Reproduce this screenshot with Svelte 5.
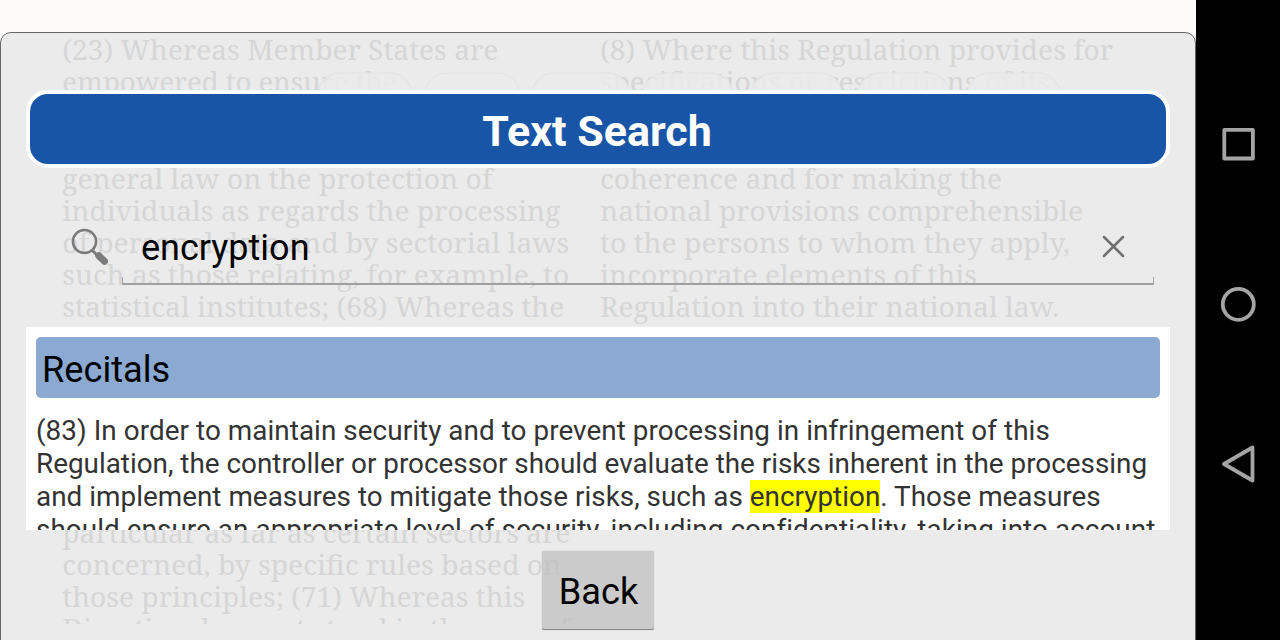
<script>
  const left = [
    [60, 436, '(23) Whereas Member States are'],
    [92, 335, 'empowered to ensure the'],
    [188.5, 430, 'general law on the protection of'],
    [220.5, 498, 'individuals as regards the processing'],
    [252.5, 507, 'of personal data and by sectorial laws'],
    [284.5, 507, 'such as those relating, for example, to'],
    [316.5, 502, 'statistical institutes; (68) Whereas the'],
    [542.5, 508, 'particular as far as certain sectors are'],
    [574.5, 499, 'concerned, by specific rules based on'],
    [606.5, 463, 'those principles; (71) Whereas this'],
    [638.5, 508, 'Directive does not stand in the way of']
  ];
  const right = [
    [60, 513, '(8) Where this Regulation provides for'],
    [92, 450, 'specifications or restrictions of its'],
    [188.5, 402, 'coherence and for making the'],
    [220.5, 483, 'national provisions comprehensible'],
    [252.5, 470, 'to the persons to whom they apply,'],
    [284.5, 377, 'incorporate elements of this'],
    [316.5, 459, 'Regulation into their national law.']
  ];
  const columns = [{ x: 62.3, lines: left }, { x: 600, lines: right }];
  const pills = [[318, 94], [425, 95], [532, 98], [643, 90], [751, 91], [858, 92], [967, 93]];
</script>

<div class="screen">
  <main>
    <div class="strip"></div>
    <section class="dialog">
      <svg class="backdrop" width="1194" height="608" viewBox="1 33 1194 608" aria-hidden="true">
        <clipPath id="page"><rect x="0" y="34" width="1196" height="590" /></clipPath>
        <g clip-path="url(#page)">
          {#each columns as col}
            {#each col.lines as [y, w, t]}
              <text x={col.x} {y} textLength={w} lengthAdjust="spacingAndGlyphs">{t}</text>
            {/each}
          {/each}
          {#each pills as [x, w]}
            <rect class="pill" {x} y="73" width={w} height="44" rx="22" />
          {/each}
        </g>
      </svg>
      <div class="content">
        <h1>Text Search</h1>
        <div class="search">
          <svg class="mag" width="44" height="44" viewBox="68 224 44 44">
            <circle cx="84.5" cy="241.5" r="11.6" fill="none" stroke="#7b7b7b" stroke-width="2.5" />
            <path d="M92.5 250.5L97 255" stroke="#7b7b7b" stroke-width="3" />
            <path d="M98.8 255.8L104.5 261.3" stroke="#7b7b7b" stroke-width="7" stroke-linecap="round" />
          </svg>
          <div class="field">
            <span>encryption</span>
            <svg width="24" height="24" viewBox="0.5 0.5 24 24"><path d="M2.5 2.5L21.5 21.5M21.5 2.5L2.5 21.5" stroke="#6f6f6f" stroke-width="2.5" stroke-linecap="round" /></svg>
          </div>
        </div>
        <div class="results">
          <h2>Recitals</h2>
          <p>
            <span class="loose">(83) In order to maintain security and to prevent processing in infringement of this</span><br />
            Regulation, the controller or processor should evaluate the risks inherent in the processing<br />
            <span class="medium">and implement measures to mitigate those risks, such as <mark>encryption</mark>. Those measures</span><br />
            <span class="loose">should ensure an appropriate level of security, including confidentiality, taking into account</span>
          </p>
        </div>
        <button>Back</button>
      </div>
    </section>
  </main>
  <nav>
    <svg width="84" height="640" viewBox="1196 0 84 640" fill="none" stroke="#a4a4a4" stroke-width="3.8" stroke-linejoin="round">
      <rect x="1224.3" y="129.9" width="28.6" height="28.6" />
      <circle cx="1238.3" cy="304.3" r="15.5" />
      <path d="M1252.5 447.5V480.5L1224 464Z" />
    </svg>
  </nav>
</div>

<style>
  :global(body) { margin: 0; overflow: hidden; }
  .screen { display: flex; width: 1280px; height: 640px; overflow: hidden; background: #000; font-family: Roboto, sans-serif; }
  main { width: 1196px; height: 640px; background: #fcfbf9; overflow: hidden; }
  .strip { height: 32px; }
  .dialog { position: relative; box-sizing: border-box; width: 1196px; height: 620px; border: 1px solid #666; border-radius: 11px; background: #ebebeb; overflow: hidden; }
  .backdrop { position: absolute; left: 0; top: 0; }
  .backdrop text { font-family: "Noto Serif", "Droid Serif", "DejaVu Serif Condensed", "DejaVu Serif", serif; font-size: 26.5px; fill: #d6d6d6; }
  .pill { fill: rgba(235, 235, 235, 0.84); stroke: #e2e2e2; stroke-width: 1; }
  .content { position: relative; display: flex; flex-direction: column; padding: 57px 25px 0; }
  h1 { box-sizing: border-box; height: 78px; margin: 0; border: 4px solid #fff; border-radius: 22px; background: #1955a6; color: #fff; font-size: 43px; line-height: 74px; font-weight: 700; text-align: center; padding-right: 2px; }
  .search { display: flex; height: 159px; box-sizing: border-box; padding: 56px 16px 0 42px; }
  .mag { flex: none; }
  .field { display: flex; position: relative; box-sizing: border-box; justify-content: space-between; margin-left: 10px; width: 1032px; height: 61px; padding: 11px 28px 0 19px; border-bottom: 2px solid #a0a0a0; font-size: 36px; line-height: 27px; color: #000; }
  .field::after { content: ""; position: absolute; left: 0; right: 0; bottom: 0; height: 6px; border: solid #a0a0a0; border-width: 0 1.5px; }
  .results { box-sizing: border-box; height: 203px; padding: 10px 10px 0; background: #fff; overflow: hidden; }
  h2 { margin: 0; height: 61px; border-radius: 5px; background: #8ba9d1; padding-left: 6px; font-size: 36.2px; line-height: 65px; font-weight: 400; color: #000; }
  p { margin: 16px 0 0; font-size: 27.85px; line-height: 33px; white-space: nowrap; color: #333; }
  .loose { letter-spacing: 0.06px; }
  .medium { letter-spacing: 0.025px; }
  mark { background: #ff0; color: #333; }
  button { align-self: center; width: 112px; height: 79px; margin: 21px 0 0; padding: 2px 0 0 1px; border: 0; border-radius: 2px; background: rgba(190, 190, 190, 0.72); box-shadow: inset 0 -1px #858585, 0 0 1px #999; font: 36.2px/42px Roboto, sans-serif; color: #000; }
</style>
